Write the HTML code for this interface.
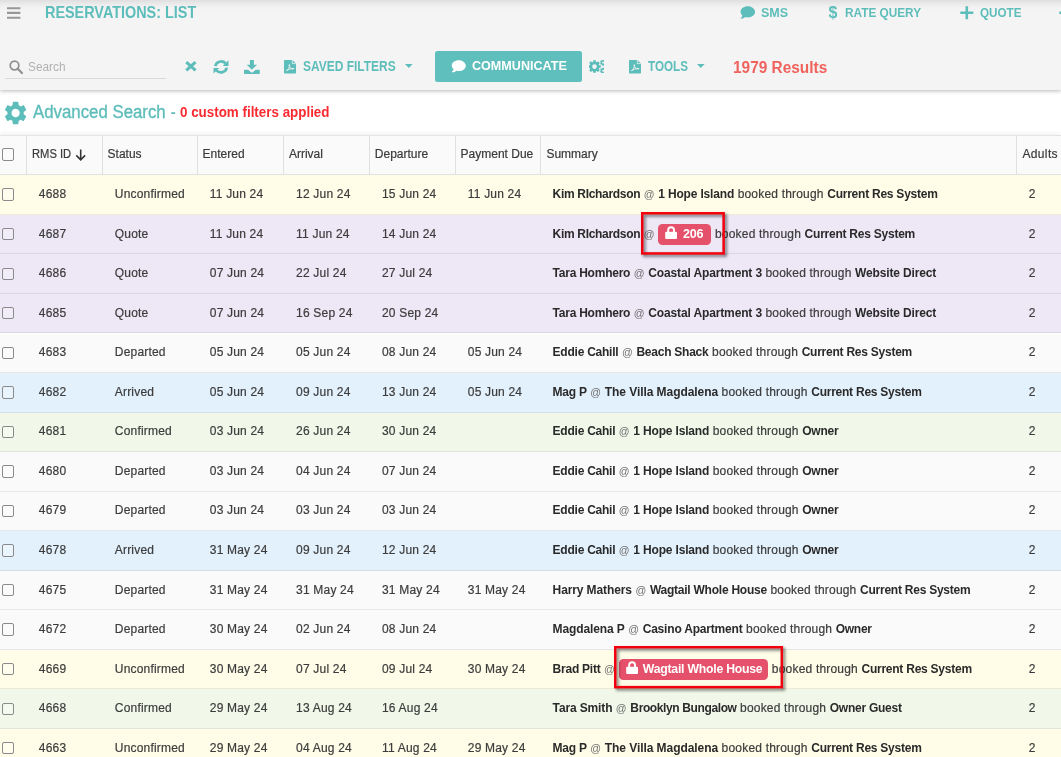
<!DOCTYPE html>
<html lang="en"><head><meta charset="utf-8"><title>Reservations: List</title>
<style>
html,body{margin:0;padding:0}
body{width:1061px;height:757px;overflow:hidden;position:relative;background:#fff;font-family:"Liberation Sans",sans-serif;-webkit-font-smoothing:antialiased}
#app{position:absolute;left:0;top:0;width:1061px;height:757px;overflow:hidden;will-change:transform}
#in{position:absolute;left:0;top:0;width:1061px;height:757px}
.abs{position:absolute}
.t{position:absolute;white-space:nowrap;line-height:20px;height:20px}
#topbar{left:0;top:0;width:1061px;height:40px;background:#f4f4f4}
#topshadow{left:0;top:0;width:1061px;height:10px;background:linear-gradient(#dfdfdf,#e9e9e9 35%,#f1f1f1 70%,#f4f4f4)}
#toolbar{left:0;top:0;width:1061px;height:89.6px;background:#f4f4f4;box-shadow:0 1px 4px rgba(0,0,0,.28)}
#advbar{left:0;top:90px;width:1061px;height:45px;background:#fff}
#thead{left:0;top:134.9px;width:1061px;height:40.4px;background:#fafafa;border-top:1px solid #e4e4e4;border-bottom:1px solid #e2e2e2;box-sizing:border-box;box-shadow:0 -2px 4px rgba(0,0,0,.05)}
.vb{position:absolute;top:135px;width:1px;height:40px;background:#e0e0e0}
.row{position:absolute;left:0;width:1061px;box-sizing:border-box;border-bottom:1px solid rgba(0,0,0,.075)}
.cb{position:absolute;left:1.8px;width:12.4px;height:12.4px;box-sizing:border-box;border:1.2px solid #8a8a8a;border-radius:2px;background:rgba(255,255,255,.25)}
.c{position:absolute;white-space:nowrap;font-size:12px;line-height:20px;height:20px;color:#3c3c3c;-webkit-text-stroke:0.2px #3c3c3c}
.at{font-size:10.6px;color:#707070;-webkit-text-stroke:0}
.c b{font-weight:700;color:#2a2a2a;-webkit-text-stroke:0}
.badge{-webkit-text-stroke:0;display:inline-block;vertical-align:middle;position:relative;top:-0.5px;height:21px;line-height:21px;border-radius:4.5px;background:#e5506a;color:#fff;font-weight:700;font-size:12.6px;box-sizing:border-box;text-align:left;white-space:nowrap;overflow:hidden}
.lk{position:absolute;top:2.6px}
.hl{position:absolute;box-sizing:border-box;border:2.4px solid #f3000c;box-shadow:2.5px 2.5px 3px rgba(0,0,0,.5)}
#btn{left:435px;top:51px;width:146.5px;height:31px;background:#5fbfbc;border-radius:2.5px}
#underline{left:5px;top:78px;width:161px;height:1px;background:#d9d9d9}
svg{position:absolute;overflow:visible}

.c{letter-spacing:0.190px}.c b,.badge{letter-spacing:-0.240px}
</style></head><body><div id="app"><div id="in">
<div class="abs" id="advbar"></div>
<div class="abs" id="toolbar"></div>
<div class="abs" id="topshadow"></div>
<div class="abs" id="btn"></div><div class="abs" id="underline"></div>
<svg style="left:7.2px;top:6.8px" width="13.4" height="13" viewBox="0 0 13.4 13"><path d="M0 1.2h13.4M0 5.9h13.4M0 10.7h13.4" stroke="#979797" stroke-width="2.1" fill="none"/></svg>
<svg style="left:740.4px;top:5.9px" width="15.6" height="13.2" viewBox="0 0 16 14"><path fill="#5dbdba" d="M8 0.3C3.7 0.3 0.3 2.9 0.3 6.1c0 1.5 0.8 2.9 2 3.9-0.3 1.2-1 2.300-2 3.200 0 0 0 0.300 0.300 0.300 1.900 0 3.600-0.800 4.600-1.800 0.900 0.200 1.800 0.400 2.800 0.400 4.300 0 7.700-2.600 7.700-5.800S12.300 0.300 8 0.300z"/></svg>
<svg style="left:960.4px;top:6px" width="13.6" height="13.6" viewBox="0 0 14 14"><path d="M7 0.300v13.400M0.300 7h13.400" stroke="#5dbdba" stroke-width="2.700" fill="none"/></svg>
<svg style="left:1058.800px;top:6px" width="13.6" height="13.6" viewBox="0 0 14 14"><path d="M7 0.300v13.400M0.300 7h13.400" stroke="#5dbdba" stroke-width="2.700" fill="none"/></svg>
<svg style="left:9px;top:60.3px" width="14" height="14" viewBox="0 0 14 14"><circle cx="5.5" cy="5.500" r="4.300" fill="none" stroke="#909090" stroke-width="1.700"/><path d="M8.700 8.700L13 13" stroke="#909090" stroke-width="2.200" stroke-linecap="round"/></svg>
<svg style="left:185px;top:61.400px" width="11.800" height="10.600" viewBox="0 0 12 11"><path d="M1.200 1.200L10.800 9.800M10.800 1.200L1.200 9.800" stroke="#5dbdba" stroke-width="3.100" fill="none"/></svg>
<svg style="left:213px;top:59.800px" width="16" height="13.800" viewBox="0 0 16 14"><g fill="none" stroke="#5dbdba" stroke-width="2.800"><path d="M2.300 6.300A5.800 5.300 0 0 1 12.600 3.500"/><path d="M13.700 7.700A5.800 5.300 0 0 1 3.400 10.500"/></g><path fill="#5dbdba" d="M15.600 0.300v5.700h-5.900zM0.400 13.700v-5.700h5.900z"/></svg>
<svg style="left:243.800px;top:59.800px" width="15.800" height="14" viewBox="0 0 16 14"><path fill="#5dbdba" d="M6 0h4v4.600h3.300L8 9.900 2.700 4.600H6z"/><path fill="#5dbdba" d="M0.500 9.800h3.700l2.600 2.200a1.800 1.800 0 0 0 2.400 0l2.600-2.200h3.700a0.500 0.500 0 0 1 0.500 0.500v3.200a0.500 0.500 0 0 1-0.500 0.500H0.500a0.500 0.500 0 0 1-0.500-0.500v-3.200a0.500 0.500 0 0 1 0.500-0.500z"/></svg>
<svg style="left:284.2px;top:59.7px" width="12" height="13.400" viewBox="0 0 12 13.400"><path fill="#5dbdba" d="M0.700 0h7.600l3.700 3.600v9.100a0.700 0.700 0 0 1-0.700 0.700H0.700a0.700 0.700 0 0 1-0.700-0.700V0.700A0.700 0.700 0 0 1 0.700 0z"/><path fill="none" stroke="#f4f4f4" stroke-width="0.800" d="M8.300 0.200v3.400h3.500"/><path fill="none" stroke="#f4f4f4" stroke-width="0.900" d="M2.400 10.600c1.800-0.900 3-3.100 3.300-5.400 0.100-0.900-0.800-0.900-0.700 0 0.300 2.200 2 3.800 4.300 3.900 0.900 0 0.800-0.900-0.100-0.800-2.300 0.300-4.700 1.100-6.800 2.300z"/></svg>
<svg style="left:629.2px;top:59.7px" width="12" height="13.400" viewBox="0 0 12 13.400"><path fill="#5dbdba" d="M0.700 0h7.600l3.700 3.600v9.100a0.700 0.700 0 0 1-0.700 0.700H0.700a0.700 0.700 0 0 1-0.700-0.700V0.700A0.700 0.700 0 0 1 0.700 0z"/><path fill="none" stroke="#f4f4f4" stroke-width="0.800" d="M8.300 0.200v3.400h3.500"/><path fill="none" stroke="#f4f4f4" stroke-width="0.900" d="M2.400 10.600c1.800-0.900 3-3.100 3.300-5.400 0.100-0.900-0.800-0.900-0.700 0 0.300 2.200 2 3.800 4.300 3.900 0.900 0 0.800-0.900-0.100-0.800-2.300 0.300-4.700 1.100-6.800 2.300z"/></svg>
<svg style="left:404.600px;top:64.300px" width="7.600" height="4" viewBox="0 0 7.600 4"><path fill="#5dbdba" d="M0 0h7.600L3.800 4z"/></svg>
<svg style="left:697.300px;top:64.300px" width="7.600" height="4" viewBox="0 0 7.600 4"><path fill="#5dbdba" d="M0 0h7.600L3.800 4z"/></svg>
<svg style="left:450.8px;top:60px" width="15.6" height="12.8" viewBox="0 0 16 14"><path fill="#fff" d="M8 0.3C3.7 0.3 0.3 2.9 0.3 6.1c0 1.5 0.8 2.9 2 3.9-0.3 1.2-1 2.300-2 3.200 0 0 0 0.300 0.300 0.300 1.900 0 3.600-0.800 4.600-1.800 0.900 0.200 1.800 0.400 2.800 0.400 4.300 0 7.700-2.600 7.700-5.800S12.300 0.300 8 0.300z"/></svg>
<svg style="left:588.8px;top:59.6px;overflow:hidden" width="15.4" height="13.6" viewBox="0 0 15.4 13.6"><path fill="#5dbdba" fill-rule="evenodd" d="M4.04 1.92 L4.26 0.32 L6.74 0.32 L6.96 1.92 L7.78 2.26 L9.06 1.28 L10.82 3.04 L9.84 4.32 L10.18 5.14 L11.78 5.36 L11.78 7.84 L10.18 8.06 L9.84 8.88 L10.82 10.16 L9.06 11.92 L7.78 10.94 L6.96 11.28 L6.74 12.88 L4.26 12.88 L4.04 11.28 L3.22 10.94 L1.94 11.92 L0.18 10.16 L1.16 8.88 L0.82 8.06 L-0.78 7.84 L-0.78 5.36 L0.82 5.14 L1.16 4.32 L0.18 3.04 L1.94 1.28 L3.22 2.26 Z M3.20 6.60 a2.30 2.30 0 1 0 4.60 0 a2.30 2.30 0 1 0 -4.60 0 Z"/><path fill="#5dbdba" fill-rule="evenodd" d="M13.15 0.44 L13.28 -0.46 L15.12 -0.46 L15.25 0.44 L15.54 0.61 L16.39 0.27 L17.32 1.87 L16.59 2.43 L16.59 2.77 L17.32 3.33 L16.39 4.93 L15.54 4.59 L15.25 4.76 L15.12 5.66 L13.28 5.66 L13.15 4.76 L12.86 4.59 L12.01 4.93 L11.08 3.33 L11.81 2.77 L11.81 2.43 L11.08 1.87 L12.01 0.27 L12.86 0.61 Z M13.20 2.60 a1.00 1.00 0 1 0 2.00 0 a1.00 1.00 0 1 0 -2.00 0 Z"/><path fill="#5dbdba" fill-rule="evenodd" d="M13.15 8.54 L13.28 7.64 L15.12 7.64 L15.25 8.54 L15.54 8.71 L16.39 8.37 L17.32 9.97 L16.59 10.53 L16.59 10.87 L17.32 11.43 L16.39 13.03 L15.54 12.69 L15.25 12.86 L15.12 13.76 L13.28 13.76 L13.15 12.86 L12.86 12.69 L12.01 13.03 L11.08 11.43 L11.81 10.87 L11.81 10.53 L11.08 9.97 L12.01 8.37 L12.86 8.71 Z M13.20 10.70 a1.00 1.00 0 1 0 2.00 0 a1.00 1.00 0 1 0 -2.00 0 Z"/></svg>
<svg style="left:2.2px;top:98.6px" width="27.2" height="28.2" viewBox="0 0 24 24" preserveAspectRatio="none"><path fill="#5dbdba" d="M19.14,12.94c0.04-0.3,0.06-0.61,0.06-0.94c0-0.32-0.02-0.64-0.07-0.94l2.03-1.58c0.18-0.14,0.23-0.41,0.12-0.61l-1.92-3.32c-0.12-0.22-0.37-0.29-0.59-0.22l-2.39,0.96c-0.5-0.38-1.03-0.7-1.62-0.94L14.4,2.81c-0.04-0.24-0.24-0.41-0.48-0.41h-3.84c-0.24,0-0.43,0.17-0.47,0.41L9.25,5.35C8.66,5.59,8.12,5.92,7.63,6.29L5.24,5.33c-0.22-0.08-0.47,0-0.59,0.22L2.74,8.87C2.62,9.08,2.66,9.34,2.86,9.48l2.03,1.58C4.84,11.36,4.8,11.69,4.8,12s0.02,0.64,0.07,0.94l-2.03,1.58c-0.18,0.14-0.23,0.41-0.12,0.61l1.92,3.32c0.12,0.22,0.37,0.29,0.59,0.22l2.39-0.96c0.5,0.38,1.03,0.7,1.62,0.94l0.36,2.54c0.05,0.24,0.24,0.41,0.48,0.41h3.84c0.24,0,0.44-0.17,0.47-0.41l0.36-2.54c0.59-0.24,1.13-0.56,1.62-0.94l2.39,0.96c0.22,0.08,0.47,0,0.59-0.22l1.92-3.32c0.12-0.22,0.07-0.47-0.12-0.61L19.14,12.94z M12,15.6c-1.98,0-3.6-1.62-3.6-3.6s1.62-3.6,3.6-3.6s3.6,1.62,3.6,3.6S13.98,15.6,12,15.6z"/></svg>
<div class="abs" id="thead"></div>
<div class="vb" style="left:25.5px"></div>
<div class="vb" style="left:101.5px"></div>
<div class="vb" style="left:196.5px"></div>
<div class="vb" style="left:282.8px"></div>
<div class="vb" style="left:368.7px"></div>
<div class="vb" style="left:454.5px"></div>
<div class="vb" style="left:540.3px"></div>
<div class="vb" style="left:1016.3px"></div>
<div class="cb" style="top:148.4px"></div>
<svg style="left:74.800px;top:148.600px" width="11.400" height="11.800" viewBox="0 0 11 12"><path d="M5.500 0.500v10M1 6.500l4.500 4.500 4.500-4.500" stroke="#333" stroke-width="1.600" fill="none"/></svg>
<div class="row" style="top:175.30px;height:39.55px;background:#fffde8"></div>
<div class="cb" style="top:188.40px"></div>
<div class="c n" style="left:38.8px;top:184px">4688</div>
<div class="c n" style="left:114.8px;top:184px">Unconfirmed</div>
<div class="c n" style="left:209.8px;top:184px">11 Jun 24</div>
<div class="c n" style="left:296.1px;top:184px">12 Jun 24</div>
<div class="c n" style="left:382.0px;top:184px">15 Jun 24</div>
<div class="c n" style="left:467.8px;top:184px">11 Jun 24</div>
<div class="c s" style="left:552.600px;top:184px"><b style="letter-spacing:-0.31px">Kim RIchardson</b> <span class="at">@</span> <b style="letter-spacing:-0.17px">1 Hope Island</b> booked through <b>Current Res System</b></div>
<div class="c n" style="left:1028.800px;top:184px">2</div>
<div class="row" style="top:214.85px;height:39.55px;background:#ede7f6"></div>
<div class="cb" style="top:227.95px"></div>
<div class="c n" style="left:38.8px;top:224px">4687</div>
<div class="c n" style="left:114.8px;top:224px">Quote</div>
<div class="c n" style="left:209.8px;top:224px">11 Jun 24</div>
<div class="c n" style="left:296.1px;top:224px">11 Jun 24</div>
<div class="c n" style="left:382.0px;top:224px">14 Jun 24</div>
<div class="c s" style="left:552.600px;top:224px"><b style="letter-spacing:-0.31px">Kim RIchardson</b> <span class="at">@</span> <span class="badge" style="width:53.2px;padding-left:25px;margin:0 0.300px 0 -0.3px;font-size:12.6px"><svg class="lk" style="left:7px" viewBox="0 0 12 13" width="12.2" height="13.4"><path fill="#fff" d="M1.2 5.6h9.6a1 1 0 0 1 1 1v5.2a1 1 0 0 1-1 1H1.2a1 1 0 0 1-1-1V6.6a1 1 0 0 1 1-1z"/><path fill="none" stroke="#fff" stroke-width="1.9" d="M3.1 6V4.1a2.9 2.9 0 0 1 5.8 0V6"/></svg><span class="bt">206</span></span> booked through <b>Current Res System</b></div>
<div class="c n" style="left:1028.800px;top:224px">2</div>
<div class="row" style="top:254.40px;height:39.55px;background:#ede7f6"></div>
<div class="cb" style="top:267.50px"></div>
<div class="c n" style="left:38.8px;top:263px">4686</div>
<div class="c n" style="left:114.8px;top:263px">Quote</div>
<div class="c n" style="left:209.8px;top:263px">07 Jun 24</div>
<div class="c n" style="left:296.1px;top:263px">22 Jul 24</div>
<div class="c n" style="left:382.0px;top:263px">27 Jul 24</div>
<div class="c s" style="left:552.600px;top:263px"><b>Tara Homhero</b> <span class="at">@</span> <b style="letter-spacing:-0.13px">Coastal Apartment 3</b> booked through <b style="letter-spacing:-0.16px">Website Direct</b></div>
<div class="c n" style="left:1028.800px;top:263px">2</div>
<div class="row" style="top:293.95px;height:39.55px;background:#ede7f6"></div>
<div class="cb" style="top:307.05px"></div>
<div class="c n" style="left:38.8px;top:303px">4685</div>
<div class="c n" style="left:114.8px;top:303px">Quote</div>
<div class="c n" style="left:209.8px;top:303px">07 Jun 24</div>
<div class="c n" style="left:296.1px;top:303px">16 Sep 24</div>
<div class="c n" style="left:382.0px;top:303px">20 Sep 24</div>
<div class="c s" style="left:552.600px;top:303px"><b>Tara Homhero</b> <span class="at">@</span> <b style="letter-spacing:-0.13px">Coastal Apartment 3</b> booked through <b style="letter-spacing:-0.16px">Website Direct</b></div>
<div class="c n" style="left:1028.800px;top:303px">2</div>
<div class="row" style="top:333.50px;height:39.55px;background:#fafafa"></div>
<div class="cb" style="top:346.60px"></div>
<div class="c n" style="left:38.8px;top:342px">4683</div>
<div class="c n" style="left:114.8px;top:342px">Departed</div>
<div class="c n" style="left:209.8px;top:342px">05 Jun 24</div>
<div class="c n" style="left:296.1px;top:342px">05 Jun 24</div>
<div class="c n" style="left:382.0px;top:342px">08 Jun 24</div>
<div class="c n" style="left:467.8px;top:342px">05 Jun 24</div>
<div class="c s" style="left:552.600px;top:342px"><b>Eddie Cahill</b> <span class="at">@</span> <b>Beach Shack</b> booked through <b>Current Res System</b></div>
<div class="c n" style="left:1028.800px;top:342px">2</div>
<div class="row" style="top:373.05px;height:39.55px;background:#e3f1fc"></div>
<div class="cb" style="top:386.15px"></div>
<div class="c n" style="left:38.8px;top:382px">4682</div>
<div class="c n" style="left:114.8px;top:382px">Arrived</div>
<div class="c n" style="left:209.8px;top:382px">05 Jun 24</div>
<div class="c n" style="left:296.1px;top:382px">09 Jun 24</div>
<div class="c n" style="left:382.0px;top:382px">13 Jun 24</div>
<div class="c n" style="left:467.8px;top:382px">05 Jun 24</div>
<div class="c s" style="left:552.600px;top:382px"><b>Mag P</b> <span class="at">@</span> <b style="letter-spacing:-0.06px">The Villa Magdalena</b> booked through <b>Current Res System</b></div>
<div class="c n" style="left:1028.800px;top:382px">2</div>
<div class="row" style="top:412.60px;height:39.55px;background:#f1f8e9"></div>
<div class="cb" style="top:425.70px"></div>
<div class="c n" style="left:38.8px;top:421px">4681</div>
<div class="c n" style="left:114.8px;top:421px">Confirmed</div>
<div class="c n" style="left:209.8px;top:421px">03 Jun 24</div>
<div class="c n" style="left:296.1px;top:421px">26 Jun 24</div>
<div class="c n" style="left:382.0px;top:421px">30 Jun 24</div>
<div class="c s" style="left:552.600px;top:421px"><b>Eddie Cahil</b> <span class="at">@</span> <b style="letter-spacing:-0.17px">1 Hope Island</b> booked through <b>Owner</b></div>
<div class="c n" style="left:1028.800px;top:421px">2</div>
<div class="row" style="top:452.15px;height:39.55px;background:#fafafa"></div>
<div class="cb" style="top:465.25px"></div>
<div class="c n" style="left:38.8px;top:461px">4680</div>
<div class="c n" style="left:114.8px;top:461px">Departed</div>
<div class="c n" style="left:209.8px;top:461px">03 Jun 24</div>
<div class="c n" style="left:296.1px;top:461px">04 Jun 24</div>
<div class="c n" style="left:382.0px;top:461px">07 Jun 24</div>
<div class="c s" style="left:552.600px;top:461px"><b>Eddie Cahil</b> <span class="at">@</span> <b style="letter-spacing:-0.17px">1 Hope Island</b> booked through <b>Owner</b></div>
<div class="c n" style="left:1028.800px;top:461px">2</div>
<div class="row" style="top:491.70px;height:39.55px;background:#fafafa"></div>
<div class="cb" style="top:504.80px"></div>
<div class="c n" style="left:38.8px;top:500px">4679</div>
<div class="c n" style="left:114.8px;top:500px">Departed</div>
<div class="c n" style="left:209.8px;top:500px">03 Jun 24</div>
<div class="c n" style="left:296.1px;top:500px">03 Jun 24</div>
<div class="c n" style="left:382.0px;top:500px">03 Jun 24</div>
<div class="c s" style="left:552.600px;top:500px"><b>Eddie Cahil</b> <span class="at">@</span> <b style="letter-spacing:-0.17px">1 Hope Island</b> booked through <b>Owner</b></div>
<div class="c n" style="left:1028.800px;top:500px">2</div>
<div class="row" style="top:531.25px;height:39.55px;background:#e3f1fc"></div>
<div class="cb" style="top:544.35px"></div>
<div class="c n" style="left:38.8px;top:540px">4678</div>
<div class="c n" style="left:114.8px;top:540px">Arrived</div>
<div class="c n" style="left:209.8px;top:540px">31 May 24</div>
<div class="c n" style="left:296.1px;top:540px">09 Jun 24</div>
<div class="c n" style="left:382.0px;top:540px">12 Jun 24</div>
<div class="c s" style="left:552.600px;top:540px"><b>Eddie Cahil</b> <span class="at">@</span> <b style="letter-spacing:-0.17px">1 Hope Island</b> booked through <b>Owner</b></div>
<div class="c n" style="left:1028.800px;top:540px">2</div>
<div class="row" style="top:570.80px;height:39.55px;background:#fafafa"></div>
<div class="cb" style="top:583.90px"></div>
<div class="c n" style="left:38.8px;top:580px">4675</div>
<div class="c n" style="left:114.8px;top:580px">Departed</div>
<div class="c n" style="left:209.8px;top:580px">31 May 24</div>
<div class="c n" style="left:296.1px;top:580px">31 May 24</div>
<div class="c n" style="left:382.0px;top:580px">31 May 24</div>
<div class="c n" style="left:467.8px;top:580px">31 May 24</div>
<div class="c s" style="left:552.600px;top:580px"><b style="letter-spacing:-0.11px">Harry Mathers</b> <span class="at">@</span> <b>Wagtail Whole House</b> booked through <b>Current Res System</b></div>
<div class="c n" style="left:1028.800px;top:580px">2</div>
<div class="row" style="top:610.35px;height:39.55px;background:#fafafa"></div>
<div class="cb" style="top:623.45px"></div>
<div class="c n" style="left:38.8px;top:619px">4672</div>
<div class="c n" style="left:114.8px;top:619px">Departed</div>
<div class="c n" style="left:209.8px;top:619px">30 May 24</div>
<div class="c n" style="left:296.1px;top:619px">02 Jun 24</div>
<div class="c n" style="left:382.0px;top:619px">08 Jun 24</div>
<div class="c s" style="left:552.600px;top:619px"><b style="letter-spacing:-0.12px">Magdalena P</b> <span class="at">@</span> <b style="letter-spacing:-0.19px">Casino Apartment</b> booked through <b>Owner</b></div>
<div class="c n" style="left:1028.800px;top:619px">2</div>
<div class="row" style="top:649.90px;height:39.55px;background:#fffde8"></div>
<div class="cb" style="top:663.00px"></div>
<div class="c n" style="left:38.8px;top:659px">4669</div>
<div class="c n" style="left:114.8px;top:659px">Unconfirmed</div>
<div class="c n" style="left:209.8px;top:659px">30 May 24</div>
<div class="c n" style="left:296.1px;top:659px">07 Jul 24</div>
<div class="c n" style="left:382.0px;top:659px">09 Jul 24</div>
<div class="c n" style="left:467.8px;top:659px">30 May 24</div>
<div class="c s" style="left:552.600px;top:659px"><b>Brad Pitt</b> <span class="at">@</span> <span class="badge" style="width:149.4px;padding-left:24.2px;margin:0 0.300px 0 0.2px;font-size:12.25px"><svg class="lk" style="left:7.6px" viewBox="0 0 12 13" width="12.2" height="13.4"><path fill="#fff" d="M1.2 5.6h9.6a1 1 0 0 1 1 1v5.2a1 1 0 0 1-1 1H1.2a1 1 0 0 1-1-1V6.6a1 1 0 0 1 1-1z"/><path fill="none" stroke="#fff" stroke-width="1.9" d="M3.1 6V4.1a2.9 2.9 0 0 1 5.8 0V6"/></svg><span class="bt">Wagtail Whole House</span></span> booked through <b>Current Res System</b></div>
<div class="c n" style="left:1028.800px;top:659px">2</div>
<div class="row" style="top:689.45px;height:39.55px;background:#f1f8e9"></div>
<div class="cb" style="top:702.55px"></div>
<div class="c n" style="left:38.8px;top:698px">4668</div>
<div class="c n" style="left:114.8px;top:698px">Confirmed</div>
<div class="c n" style="left:209.8px;top:698px">29 May 24</div>
<div class="c n" style="left:296.1px;top:698px">13 Aug 24</div>
<div class="c n" style="left:382.0px;top:698px">16 Aug 24</div>
<div class="c s" style="left:552.600px;top:698px"><b style="letter-spacing:-0.14px">Tara Smith</b> <span class="at">@</span> <b style="letter-spacing:-0.38px">Brooklyn Bungalow</b> booked through <b>Owner Guest</b></div>
<div class="c n" style="left:1028.800px;top:698px">2</div>
<div class="row" style="top:729.00px;height:39.55px;background:#fffde8"></div>
<div class="cb" style="top:742.10px"></div>
<div class="c n" style="left:38.8px;top:738px">4663</div>
<div class="c n" style="left:114.8px;top:738px">Unconfirmed</div>
<div class="c n" style="left:209.8px;top:738px">29 May 24</div>
<div class="c n" style="left:296.1px;top:738px">04 Aug 24</div>
<div class="c n" style="left:382.0px;top:738px">11 Aug 24</div>
<div class="c n" style="left:467.8px;top:738px">29 May 24</div>
<div class="c s" style="left:552.600px;top:738px"><b>Mag P</b> <span class="at">@</span> <b style="letter-spacing:-0.06px">The Villa Magdalena</b> booked through <b>Current Res System</b></div>
<div class="c n" style="left:1028.800px;top:738px">2</div>
<svg class="hlbox" style="left:641.1px;top:212.3px;filter:drop-shadow(2.2px 2.4px 1.6px rgba(0,0,0,.55))" width="83.9" height="42.7" viewBox="0 0 83.9 42.7"><rect x="1.25" y="1.25" width="81.40" height="40.20" fill="none" stroke="#f2000d" stroke-width="2.5"/></svg>
<svg class="hlbox" style="left:613.5px;top:646.0px;filter:drop-shadow(2.2px 2.4px 1.6px rgba(0,0,0,.55))" width="169.1" height="42.4" viewBox="0 0 169.1 42.4"><rect x="1.25" y="1.25" width="166.60" height="39.90" fill="none" stroke="#f2000d" stroke-width="2.5"/></svg>
<div class="t" id="title" style="left:44.9px;top:2.80px;font-size:15.9px;font-weight:700;color:#5dbdba;transform:scaleX(0.9061);transform-origin:0 50%;">RESERVATIONS: LIST</div>
<div class="t" id="sms" style="left:760.8px;top:3.00px;font-size:13px;font-weight:700;color:#5dbdba;transform:scaleX(0.9655);transform-origin:0 50%;">SMS</div>
<div class="t" id="dollar" style="left:828.4px;top:2.90px;font-size:16px;font-weight:700;color:#5dbdba;letter-spacing:0.909px;">$</div>
<div class="t" id="rateq" style="left:845.4px;top:3.00px;font-size:13px;font-weight:700;color:#5dbdba;transform:scaleX(0.9081);transform-origin:0 50%;">RATE QUERY</div>
<div class="t" id="quote" style="left:979.7px;top:3.00px;font-size:13px;font-weight:700;color:#5dbdba;transform:scaleX(0.8976);transform-origin:0 50%;">QUOTE</div>
<div class="t" id="search" style="left:27.5px;top:56.50px;font-size:12px;font-weight:400;color:#b0b0b0;transform:scaleX(0.9860);transform-origin:0 50%;">Search</div>
<div class="t" id="saved" style="left:302.7px;top:56.00px;font-size:14px;font-weight:700;color:#5dbdba;transform:scaleX(0.8552);transform-origin:0 50%;">SAVED FILTERS</div>
<div class="t" id="comm" style="left:471.7px;top:56.00px;font-size:13px;font-weight:700;color:#fff;transform:scaleX(0.9675);transform-origin:0 50%;">COMMUNICATE</div>
<div class="t" id="tools" style="left:648.4px;top:56.00px;font-size:14px;font-weight:700;color:#5dbdba;transform:scaleX(0.8318);transform-origin:0 50%;">TOOLS</div>
<div class="t" id="results" style="left:732.8px;top:57.80px;font-size:16px;font-weight:700;color:#f0625c;transform:scaleX(0.9628);transform-origin:0 50%;">1979 Results</div>
<div class="t" id="adv" style="left:33.3px;top:101.50px;font-size:17.5px;font-weight:400;color:#5dbdba;transform:scaleX(0.9605);transform-origin:0 50%;-webkit-text-stroke:0.35px #5dbdba;">Advanced Search</div>
<div class="t" id="advdash" style="left:170.8px;top:101.50px;font-size:15px;font-weight:700;color:#5dbdba;">-</div>
<div class="t" id="advred" style="left:180.0px;top:102.20px;font-size:14px;font-weight:700;color:#fa2a30;transform:scaleX(0.9560);transform-origin:0 50%;">0 custom filters applied</div>
<div class="t" id="h1" style="left:31.6px;top:144.00px;font-size:12px;font-weight:400;color:#3a3a3a;transform:scaleX(0.9333);transform-origin:0 50%;-webkit-text-stroke:0.2px #3a3a3a;">RMS ID</div>
<div class="t" id="h2" style="left:107.6px;top:144.00px;font-size:12px;font-weight:400;color:#3a3a3a;-webkit-text-stroke:0.2px #3a3a3a;">Status</div>
<div class="t" id="h3" style="left:202.6px;top:144.00px;font-size:12px;font-weight:400;color:#3a3a3a;-webkit-text-stroke:0.2px #3a3a3a;">Entered</div>
<div class="t" id="h4" style="left:288.9px;top:144.00px;font-size:12px;font-weight:400;color:#3a3a3a;-webkit-text-stroke:0.2px #3a3a3a;">Arrival</div>
<div class="t" id="h5" style="left:374.8px;top:144.00px;font-size:12px;font-weight:400;color:#3a3a3a;-webkit-text-stroke:0.2px #3a3a3a;">Departure</div>
<div class="t" id="h6" style="left:460.6px;top:144.00px;font-size:12px;font-weight:400;color:#3a3a3a;-webkit-text-stroke:0.2px #3a3a3a;">Payment Due</div>
<div class="t" id="h7" style="left:546.4px;top:144.00px;font-size:12px;font-weight:400;color:#3a3a3a;-webkit-text-stroke:0.2px #3a3a3a;">Summary</div>
<div class="t" id="h8" style="left:1022.4px;top:144.00px;font-size:12px;font-weight:400;color:#3a3a3a;letter-spacing:0.369px;-webkit-text-stroke:0.2px #3a3a3a;">Adults</div>
</div></div></body></html>
